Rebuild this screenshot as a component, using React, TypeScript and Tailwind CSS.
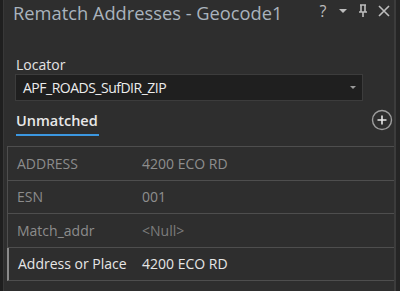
import React from "react";

const font = { fontFamily: '"Open Sans", "Noto Sans", sans-serif' };

function Row({ label, value, active, dimValue }: { label: string; value: string; active?: boolean; dimValue?: boolean }) {
  return (
    <div className={`flex h-[33.5px] border-b border-[#4e4e4e] ${active ? "border-l-2 border-l-[#8a8a8a]" : "border-l border-l-[#4e4e4e]"}`}>
      <div className={`${active ? "w-[129px]" : "w-[130px]"} flex items-center pl-[9px] text-[14px] ${active ? "text-[#e6e6e6]" : "text-[#8c8c8c]"}`}>{label}</div>
      <div className={`flex-1 flex items-center pl-[4px] text-[14px] ${active ? "text-[#e6e6e6]" : dimValue ? "text-[#7c7c7c]" : "text-[#8e8e8e]"}`}>{value}</div>
    </div>
  );
}

export default function App() {
  return (
    <div className="w-[400px] h-[291px] flex bg-[#232323] overflow-hidden" style={font}>
      <div className="w-[4px] bg-[#1f1f1f] border-r border-[#383838]" />
      <div className="flex-1 bg-[#2e2e2e] flex flex-col relative">
        <div className="flex items-start h-[54px] pl-[9px] pt-[0px]">
          <div className="text-[18.3px] leading-[25px] text-[#a9b3bd]">Rematch Addresses - Geocode1</div>
        </div>
        <div className="absolute top-[3px] right-[3px] flex items-center gap-[8px] text-[#bdbdbd]">
          <span className="text-[16px] leading-[16px] w-[12px] text-center">?</span>
          <svg width="12" height="12" viewBox="0 0 12 12"><path d="M2 4 L10 4 L6 8 Z" fill="#bdbdbd" /></svg>
          <svg width="12" height="14" viewBox="0 0 12 14"><path d="M3 1 H9 M4 1 V8 M8 1 V8 M2 8 H10 M6 8 V13" stroke="#bdbdbd" strokeWidth="1.6" fill="none" /></svg>
          <svg width="14" height="14" viewBox="0 0 14 14"><path d="M2 2 L12 12 M12 2 L2 12" stroke="#bdbdbd" strokeWidth="1.6" /></svg>
        </div>
        <div className="pl-[11px] pr-[31px]">
          <div className="text-[14px] leading-[20px] text-[#e4e4e4] pl-[1px] mt-[1px] -mb-[1px]">Locator</div>
          <div className="h-[27px] bg-[#1f1f1f] border border-[#3c3c3c] flex items-center justify-between pl-[7px] pr-[5px]">
            <span className="text-[14px] tracking-[-0.5px] text-[#ececec]">APF_ROADS_SufDIR_ZIP</span>
            <svg width="8" height="6" viewBox="0 0 8 6"><path d="M1 1 L7 1 L4 4 Z" fill="#9a9a9a" /></svg>
          </div>
        </div>
        <div className="flex items-start justify-between pl-[12px] pr-[1px] mt-[9px] h-[36px]">
          <div className="flex flex-col">
            <span className="text-[14.5px] leading-[22px] font-semibold text-[#e8e8e8]">Unmatched</span>
            <div className="h-[2px] bg-[#3b97e0] mt-[2px] w-[83px]" />
          </div>
          <svg width="22" height="22" viewBox="0 0 22 22" className="mt-[-1px]">
            <circle cx="11" cy="11" r="9.5" stroke="#9d9d9d" strokeWidth="1.4" fill="none" />
            <path d="M11 6.5 V15.5 M6.5 11 H15.5" stroke="#e8e8e8" strokeWidth="1.6" />
          </svg>
        </div>
        <div className="ml-[3px] border-t border-[#4e4e4e]">
          <Row label="ADDRESS" value="4200 ECO RD" />
          <Row label="ESN" value="001" />
          <Row label="Match_addr" value="<Null>" dimValue />
          <Row label="Address or Place" value="4200 ECO RD" active />
        </div>
      </div>
      <div className="w-[2px] bg-[#3c3c3c]" />
      <div className="w-[4px] bg-[#252525]" />
    </div>
  );
}
